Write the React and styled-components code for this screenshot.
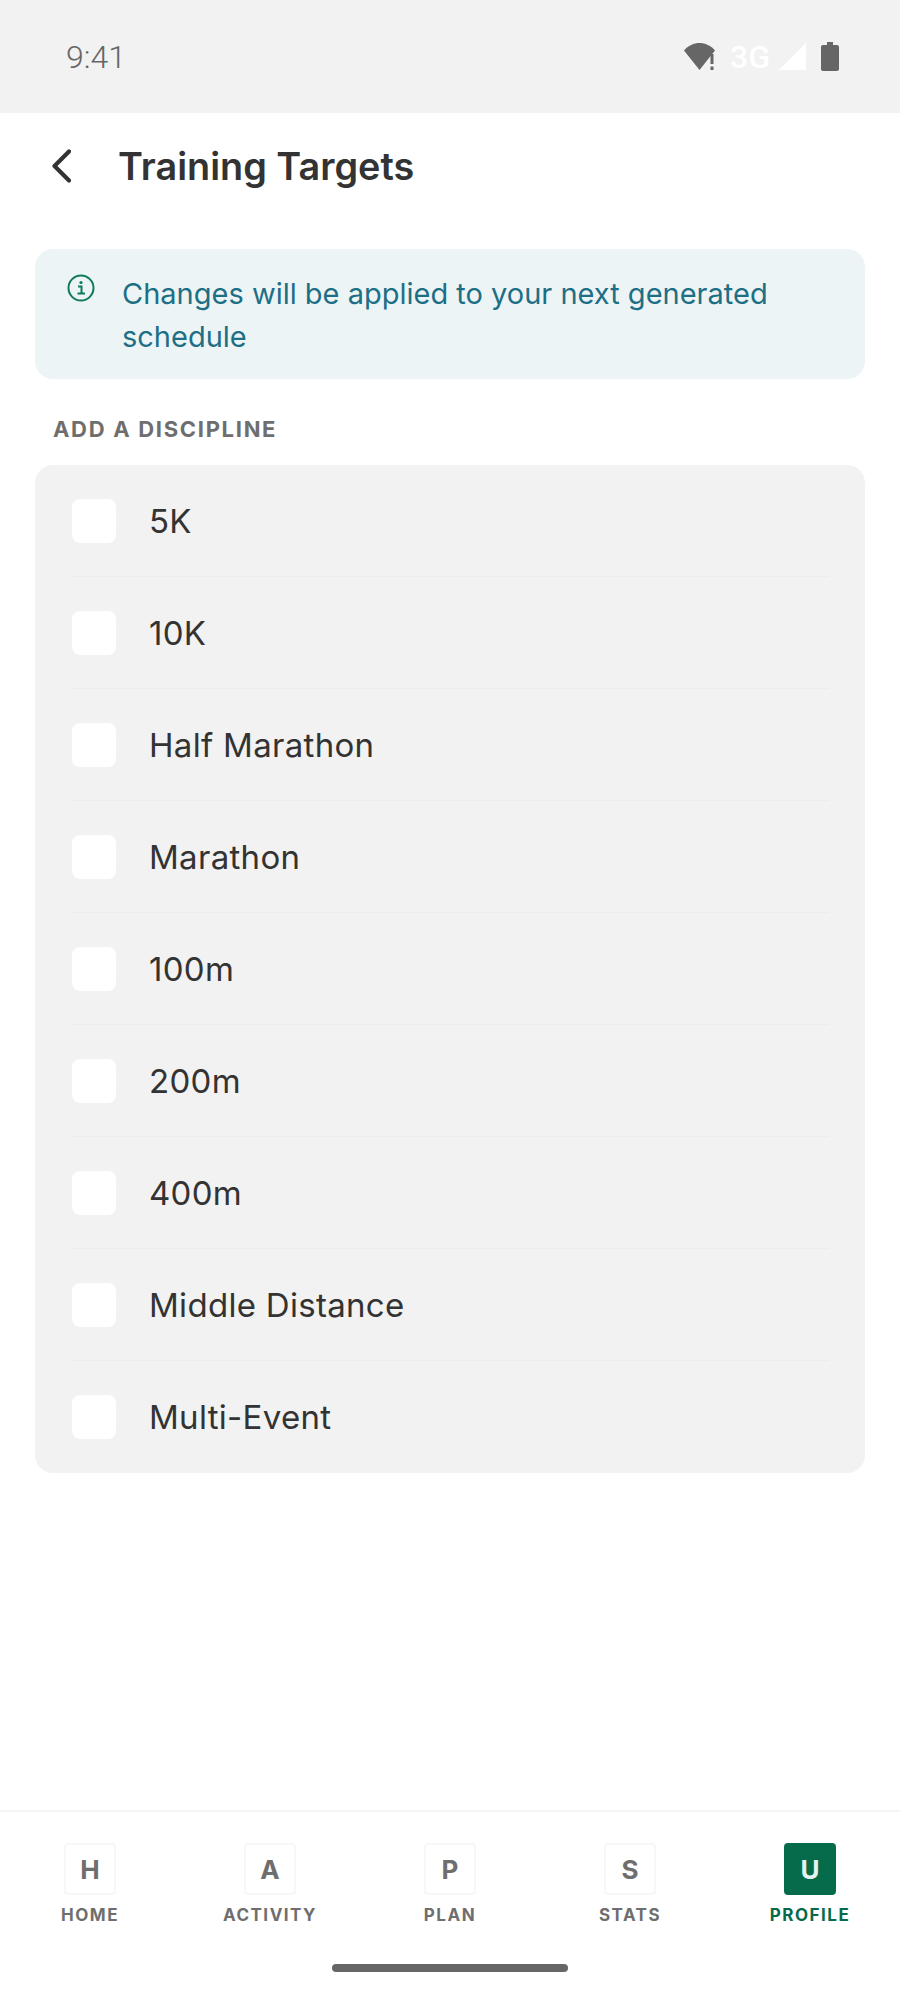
import styled, { createGlobalStyle } from 'styled-components';

const GlobalStyle = createGlobalStyle`
  html, body {
    margin: 0;
    padding: 0;
    background: #ffffff;
    font-family: Inter, "Liberation Sans", sans-serif;
  }
`;

const Page = styled.div`
  width: 900px;
  height: 2000px;
  display: flex;
  flex-direction: column;
  background: #ffffff;
`;

// --- status bar ---

const StatusBar = styled.div`
  height: 113px;
  flex: none;
  display: flex;
  align-items: center;
  justify-content: space-between;
  padding: 0 61px 0 66px;
  background: #f2f2f2;
`;

const Clock = styled.span`
  font-family: Roboto, sans-serif;
  font-size: 32px;
  font-weight: 300;
  color: #666666;
`;

const StatusIcons = styled.div`
  display: flex;
  align-items: center;
`;

const NetworkLabel = styled.span`
  font-family: Roboto, sans-serif;
  font-size: 32px;
  font-weight: 500;
  color: #ffffff;
  margin: 0 9px 0 10px;
`;

// --- header ---

const Header = styled.header`
  height: 106px;
  flex: none;
  display: flex;
  align-items: center;
  padding-left: 51px;
  gap: 47px;
`;

const Title = styled.h1`
  margin: 0;
  font-size: 37.8px;
  font-weight: 600;
  color: #333333;
`;

// --- content ---

const Content = styled.main`
  flex: 1;
  padding: 30px 35px 0;
`;

const Banner = styled.div`
  display: flex;
  align-items: flex-start;
  gap: 27px;
  height: 130px;
  box-sizing: border-box;
  padding: 23px 30px 0 32px;
  background: #edf4f6;
  border-radius: 18px;
`;

const BannerText = styled.p`
  margin: 0;
  font-size: 29px;
  line-height: 43px;
  color: #1d6f85;
`;

const SectionLabel = styled.div`
  margin: 37px 0 22px 18px;
  font-size: 22px;
  line-height: 27px;
  font-weight: 700;
  letter-spacing: 1.7px;
  color: #6e6e6e;
`;

const ListCard = styled.div`
  padding: 0 36px;
  background: #f2f2f2;
  border-radius: 18px;
`;

const Row = styled.div`
  height: 112px;
  box-sizing: border-box;
  display: flex;
  align-items: center;
  gap: 33px;
  border-bottom: 1px solid ${(p) => (p.$last ? 'transparent' : '#ececec')};
`;

const Checkbox = styled.span`
  width: 44px;
  height: 44px;
  flex: none;
  margin-left: 1px;
  background: #ffffff;
  border-radius: 8px;
`;

const RowLabel = styled.span`
  font-size: 33px;
  letter-spacing: 0.3px;
  padding-top: 1px;
  color: #333333;
`;

// --- bottom nav ---

const BottomNav = styled.nav`
  height: 190px;
  flex: none;
  box-sizing: border-box;
  border-top: 2px solid #f5f5f5;
  display: flex;
  flex-direction: column;
  align-items: center;
`;

const Tabs = styled.div`
  width: 100%;
  display: grid;
  grid-template-columns: repeat(5, 180px);
  justify-content: center;
  padding-top: 31px;
`;

const Tab = styled.div`
  display: flex;
  flex-direction: column;
  align-items: center;
  gap: 10px;
`;

const TabIcon = styled.div`
  width: 52px;
  height: 52px;
  box-sizing: border-box;
  display: flex;
  align-items: center;
  justify-content: center;
  border-radius: 4px;
  font-size: 26px;
  font-weight: 700;
  border: 2px solid ${(p) => (p.$active ? '#066b4a' : '#f7f7f7')};
  background: ${(p) => (p.$active ? '#066b4a' : '#ffffff')};
  color: ${(p) => (p.$active ? '#e6f3ee' : '#6e6e6e')};
`;

const TabLabel = styled.span`
  font-size: 17px;
  line-height: 20px;
  font-weight: 700;
  letter-spacing: 1.5px;
  color: ${(p) => (p.$active ? '#066b4a' : '#6e6e6e')};
`;

const HomeBar = styled.div`
  width: 236px;
  height: 8px;
  margin-top: 39px;
  border-radius: 4px;
  background: #666666;
`;

const disciplines = [
  '5K',
  '10K',
  'Half Marathon',
  'Marathon',
  '100m',
  '200m',
  '400m',
  'Middle Distance',
  'Multi-Event',
];

const tabs = [
  { key: 'H', label: 'HOME' },
  { key: 'A', label: 'ACTIVITY' },
  { key: 'P', label: 'PLAN' },
  { key: 'S', label: 'STATS' },
  { key: 'U', label: 'PROFILE', active: true },
];

function BackIcon() {
  return (
    <svg width="20" height="34" viewBox="0 0 20 34" fill="none" style={{ flex: 'none' }}>
      <path d="M18 2.5L3.5 17L18 31.5" stroke="#333333" strokeWidth="4.2" strokeLinecap="round" strokeLinejoin="round" />
    </svg>
  );
}

function WifiAlert() {
  return (
    <svg width="36" height="30" viewBox="0 0 36 30">
      <path d="M0 8.5C4 3.5 10 1 15.5 1S27 3.5 31 8.5L15.5 28Z" fill="#666666" />
      <rect x="26.5" y="12" width="3" height="10" fill="#666666" />
      <rect x="26.5" y="24.5" width="3" height="3.5" fill="#666666" />
    </svg>
  );
}

function Signal() {
  return (
    <svg width="27" height="27" viewBox="0 0 27 27">
      <path d="M27 0V27H0Z" fill="#ffffff" />
    </svg>
  );
}

function Battery() {
  return (
    <svg width="18" height="29" viewBox="0 0 18 29" style={{ marginLeft: 15 }}>
      <path
        d="M6 0H12V3H16C17.1 3 18 3.9 18 5V27C18 28.1 17.1 29 16 29H2C0.9 29 0 28.1 0 27V5C0 3.9 0.9 3 2 3H6Z"
        fill="#666666"
      />
    </svg>
  );
}

function InfoIcon() {
  return (
    <svg width="28" height="28" viewBox="0 0 28 28" fill="none" style={{ flex: 'none', marginTop: 2 }}>
      <circle cx="14" cy="14" r="12.5" stroke="#0f7a58" strokeWidth="2" />
      <circle cx="14" cy="8.5" r="1.6" fill="#0f7a58" />
      <path d="M11 12.5H14.5V19.5M10.5 19.5H18" stroke="#0f7a58" strokeWidth="2" />
    </svg>
  );
}

export default function App() {
  return (
    <Page>
      <GlobalStyle />
      <StatusBar>
        <Clock>9:41</Clock>
        <StatusIcons>
          <WifiAlert />
          <NetworkLabel>3G</NetworkLabel>
          <Signal />
          <Battery />
        </StatusIcons>
      </StatusBar>

      <Header>
        <BackIcon />
        <Title>Training Targets</Title>
      </Header>

      <Content>
        <Banner>
          <InfoIcon />
          <BannerText>Changes will be applied to your next generated schedule</BannerText>
        </Banner>

        <SectionLabel>ADD A DISCIPLINE</SectionLabel>

        <ListCard>
          {disciplines.map((name, i) => (
            <Row key={name} $last={i === disciplines.length - 1}>
              <Checkbox />
              <RowLabel>{name}</RowLabel>
            </Row>
          ))}
        </ListCard>
      </Content>

      <BottomNav>
        <Tabs>
          {tabs.map((tab) => (
            <Tab key={tab.key}>
              <TabIcon $active={tab.active}>{tab.key}</TabIcon>
              <TabLabel $active={tab.active}>{tab.label}</TabLabel>
            </Tab>
          ))}
        </Tabs>
        <HomeBar />
      </BottomNav>
    </Page>
  );
}
